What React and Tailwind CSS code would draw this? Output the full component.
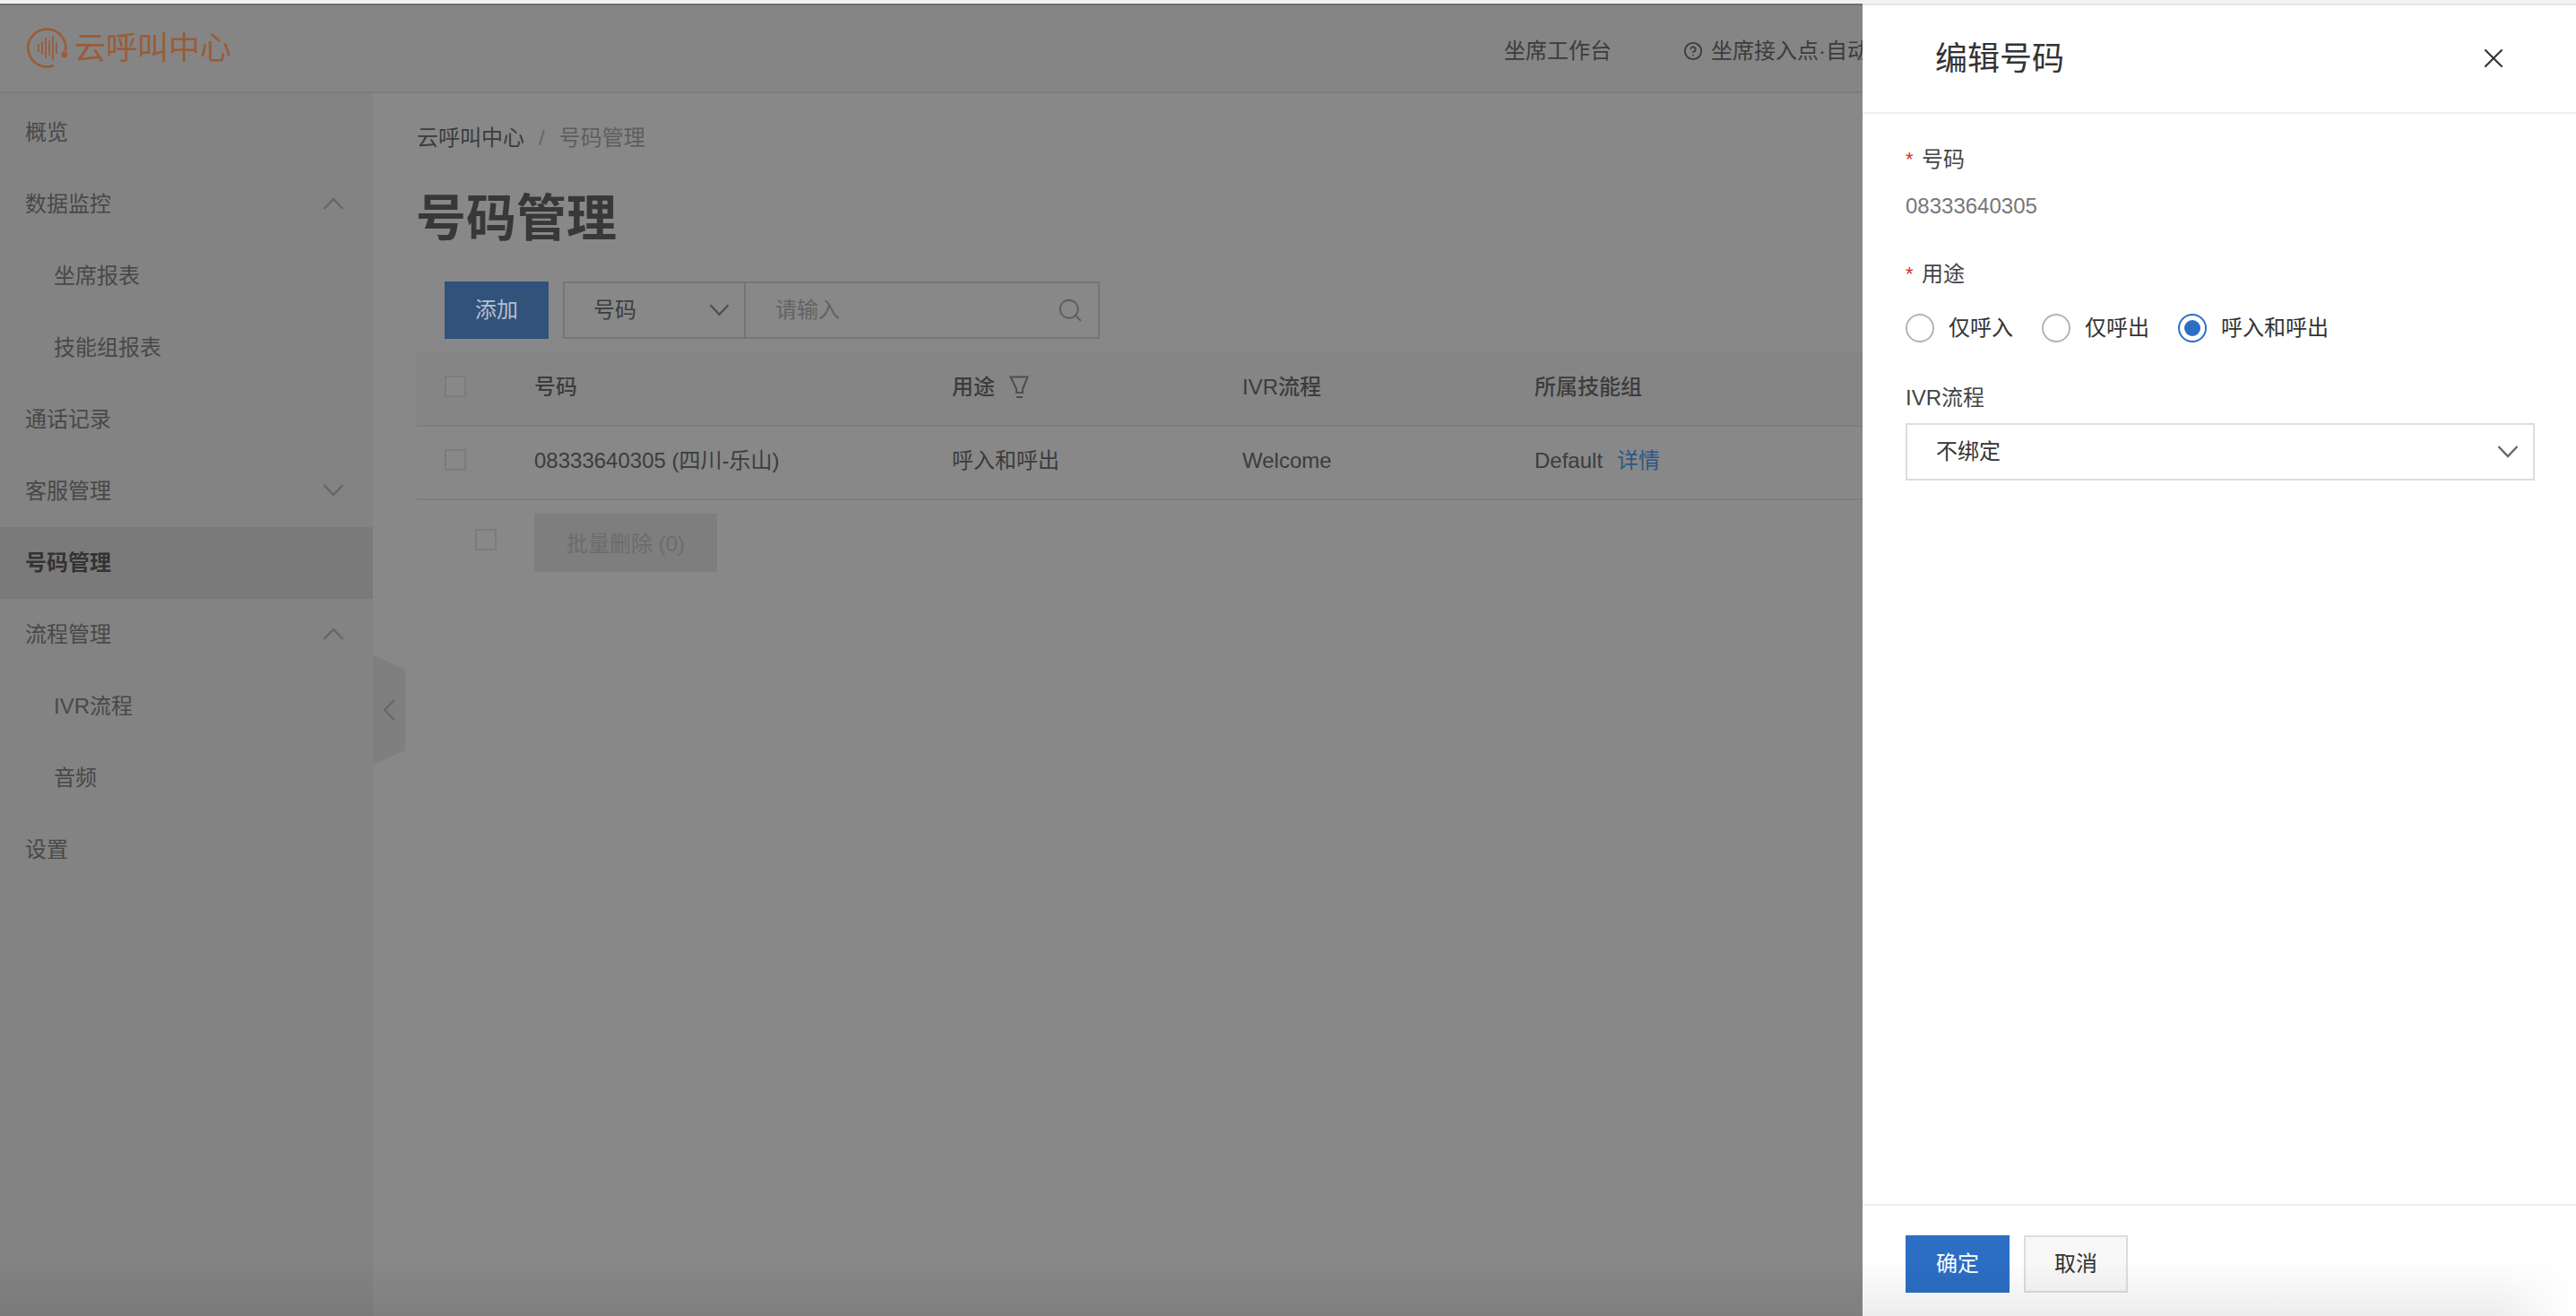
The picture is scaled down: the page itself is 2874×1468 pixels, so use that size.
import React from 'react'
import { Search, X, CircleHelp } from 'lucide-react'

const Chevron = ({ up = false, className = '' }) => (
  <svg viewBox="0 0 24 14" fill="none" stroke="currentColor" strokeWidth="2.4" className={className}>
    <polyline points={up ? '1.5,13 12,2 22.5,13' : '1.5,1 12,12 22.5,1'} />
  </svg>
)

const Logo = () => (
  <svg viewBox="0 0 48 48" className="w-[48px] h-[48px] shrink-0" fill="none" stroke="#9a5c38" strokeWidth="2.6">
    <path d="M43 27 A21 21 0 1 0 30 43" />
    <circle cx="42" cy="31" r="3.4" fill="#9a5c38" stroke="none" />
    <path d="M13 20v7M17 17v13M21 13v21M25 16v15M29 11v25M33 18v11" strokeLinecap="round" strokeWidth="1.8" />
  </svg>
)

const Checkbox = () => <div className="w-[24px] h-[24px] border-2 border-[#7c7c7c] bg-[#888888]" />

const FilterIcon = () => (
  <svg viewBox="0 0 22 26" className="w-[22px] h-[26px]" fill="none" stroke="#4e4e4e" strokeWidth="2">
    <path d="M1.5 1.5H20.5L15 15V19H8V15Z" />
    <path d="M8 24H15" />
  </svg>
)

const MenuItem = ({ label, sub, active, chevron }) => (
  <div className={`h-[80px] flex items-center justify-between pr-[32px] ${sub ? 'pl-[60px]' : 'pl-[28px]'} ${active ? 'bg-[#7a7a7a] font-semibold text-[#333333]' : 'text-[#484848]'}`}>
    <span>{label}</span>
    {chevron && <Chevron up={chevron === 'up'} className="w-[24px] h-[14px] text-[#666666] -mt-[2px]" />}
  </div>
)

const Radio = ({ label, checked }) => (
  <label className="flex items-center gap-[16px] mr-[32px] text-[#333333]">
    <span className={`w-[32px] h-[32px] rounded-full border-2 flex items-center justify-center ${checked ? 'border-[#2b6ec4]' : 'border-[#b4b4b4]'}`}>
      {checked && <span className="w-[18px] h-[18px] rounded-full bg-[#2b6ec4]" />}
    </span>
    <span>{label}</span>
  </label>
)

const Field = ({ required, className = '', children }) => (
  <div className={`h-[32px] flex items-center text-[#444444] ${className}`}>
    {required && <span className="text-[#d93026] w-[18px] text-[22px]">*</span>}
    {children}
  </div>
)

const cols = 'grid grid-cols-[131px_466px_324px_326px_1fr] items-center'

export default function App() {
  return (
    <div className="relative w-full h-[1468px] overflow-hidden bg-[#888888] text-[24px] leading-[32px] text-[#3c3c3c]" style={{ fontFamily: '"Liberation Sans", "Noto Sans CJK SC", sans-serif' }}>
      <div className="h-[4px] bg-[#f2f2f2]" />

      <header className="h-[100px] bg-[#858585] border-t-2 border-b-2 border-t-[#6f6f6f] border-b-[#7c7c7c] flex items-center pl-[30px] relative">
        <Logo />
        <span className="text-[35px] text-[#9a5c38] ml-[5px]">云呼叫中心</span>
        <div className="flex items-center ml-[1420px] mt-[6px] whitespace-nowrap text-[#3c3c3c]">
          <span>坐席工作台</span>
          <CircleHelp className="w-[22px] h-[22px] ml-[80px] mr-[9px]" strokeWidth={2} />
          <span>坐席接入点·自动分配</span>
        </div>
      </header>

      <div className="flex h-[1364px]">
        <aside className="w-[416px] shrink-0 bg-[#838383] pt-[4px]">
          <MenuItem label="概览" />
          <MenuItem label="数据监控" chevron="up" />
          <MenuItem label="坐席报表" sub />
          <MenuItem label="技能组报表" sub />
          <MenuItem label="通话记录" />
          <MenuItem label="客服管理" chevron="down" />
          <MenuItem label="号码管理" active />
          <MenuItem label="流程管理" chevron="up" />
          <MenuItem label="IVR流程" sub />
          <MenuItem label="音频" sub />
          <MenuItem label="设置" />
        </aside>

        <main className="relative flex-1 pl-[49px] pt-[34px]">
          <div className="h-[32px] flex items-center">
            <span className="text-[#3c3c3c]">云呼叫中心</span>
            <span className="text-[#666666] mx-[16px]">/</span>
            <span className="text-[#5e5e5e]">号码管理</span>
          </div>

          <h1 className="h-[64px] mt-[42px] -ml-[1px] text-[56px] leading-[64px] font-semibold text-[#383838]">号码管理</h1>

          <div className="mt-[38px] ml-[31px] flex h-[64px]">
            <button className="w-[116px] bg-[#31527b] text-[#b4bfce]">添加</button>
            <div className="ml-[16px] w-[599px] flex border-2 border-[#757575]">
              <div className="w-[202px] border-r-2 border-[#757575] flex items-center justify-between pl-[32px] pr-[16px] text-[#3c3c3c]">
                <span>号码</span>
                <Chevron className="w-[23px] h-[14px] text-[#4e4e4e]" />
              </div>
              <div className="flex-1 flex items-center justify-between pl-[33px] pr-[16px] text-[#636363]">
                <span>请输入</span>
                <Search className="w-[30px] h-[30px] text-[#5e5e5e]" strokeWidth={1.5} />
              </div>
            </div>
          </div>

          <div className="mt-[15px]">
            <div className={`${cols} h-[83px] bg-[#858585] border-b-2 border-[#7e7e7e] pb-[3px] font-medium`}>
              <div className="pl-[31px] -mt-[3px]"><Checkbox /></div>
              <span>号码</span>
              <span className="flex items-center gap-[16px]">用途 <FilterIcon /></span>
              <span>IVR流程</span>
              <span className="whitespace-nowrap">所属技能组</span>
            </div>
            <div className={`${cols} h-[82px] border-b-2 border-[#7e7e7e] pb-[5px]`}>
              <div className="pl-[31px] -mt-[2px]"><Checkbox /></div>
              <span className="whitespace-nowrap">08333640305 (四川-乐山)</span>
              <span>呼入和呼出</span>
              <span>Welcome</span>
              <span className="whitespace-nowrap">Default<span className="ml-[16px] text-[#2e5789]">详情</span></span>
            </div>
            <div className="flex items-start mt-[15px] pl-[65px]">
              <div className="mt-[17px]"><Checkbox /></div>
              <button className="ml-[42px] w-[204px] h-[65px] pt-[2px] bg-[#7e7e7e] text-[#6c6c6c]">批量删除 (0)</button>
            </div>
          </div>

          <button className="absolute left-0 top-[626px] w-[36px] h-[123px] bg-[#7f7f7f] flex items-center justify-center [clip-path:polygon(0_0,100%_14%,100%_87%,0_100%)]" aria-label="收起">
            <svg viewBox="0 0 14 24" className="w-[14px] h-[24px]" fill="none" stroke="#666666" strokeWidth="2"><polyline points="13,1 2,12 13,23" /></svg>
          </button>
        </main>
      </div>

      <aside className="absolute right-0 top-[4px] bottom-0 w-[796px] bg-white border-t-2 border-[#e4e4e4] flex flex-col">
        <div className="h-[121px] shrink-0 border-b-2 border-[#eeeeee] flex items-center justify-between pl-[81px] pr-[74px]">
          <span className="text-[36px] leading-[44px] text-[#333333]">编辑号码</span>
          <X className="w-[36px] h-[36px] text-[#333333] -mt-[1px]" strokeWidth={1.4} />
        </div>

        <div className="flex-1 pl-[48px] pr-[46px] pt-[35px]">
          <Field required>号码</Field>
          <div className="h-[32px] mt-[20px] flex items-center text-[#777777]">08333640305</div>
          <Field required className="mt-[44px]">用途</Field>
          <div className="mt-[28px] flex h-[32px]">
            <Radio label="仅呼入" />
            <Radio label="仅呼出" />
            <Radio label="呼入和呼出" checked />
          </div>
          <Field className="mt-[46px]">IVR流程</Field>
          <div className="mt-[12px] h-[64px] border-2 border-[#dddddd] flex items-center justify-between pl-[32px] pr-[16px] text-[#333333]">
            <span>不绑定</span>
            <Chevron className="w-[24px] h-[14px] text-[#666666]" />
          </div>
        </div>

        <div className="h-[125px] shrink-0 border-t-2 border-[#eeeeee] pt-[33px] pl-[48px] flex items-start gap-[16px]">
          <button className="w-[116px] h-[64px] bg-[#2b6ec4] text-white">确定</button>
          <button className="w-[116px] h-[64px] bg-[#f8f8f8] border-2 border-[#dddddd] text-[#333333]">取消</button>
        </div>
      </aside>

      <div className="absolute inset-x-0 bottom-0 h-[64px] pointer-events-none bg-gradient-to-t from-[#00000012] to-transparent" />
      <div className="absolute right-0 bottom-0 w-[90px] h-[64px] pointer-events-none bg-gradient-to-l from-white to-transparent" />
    </div>
  )
}
